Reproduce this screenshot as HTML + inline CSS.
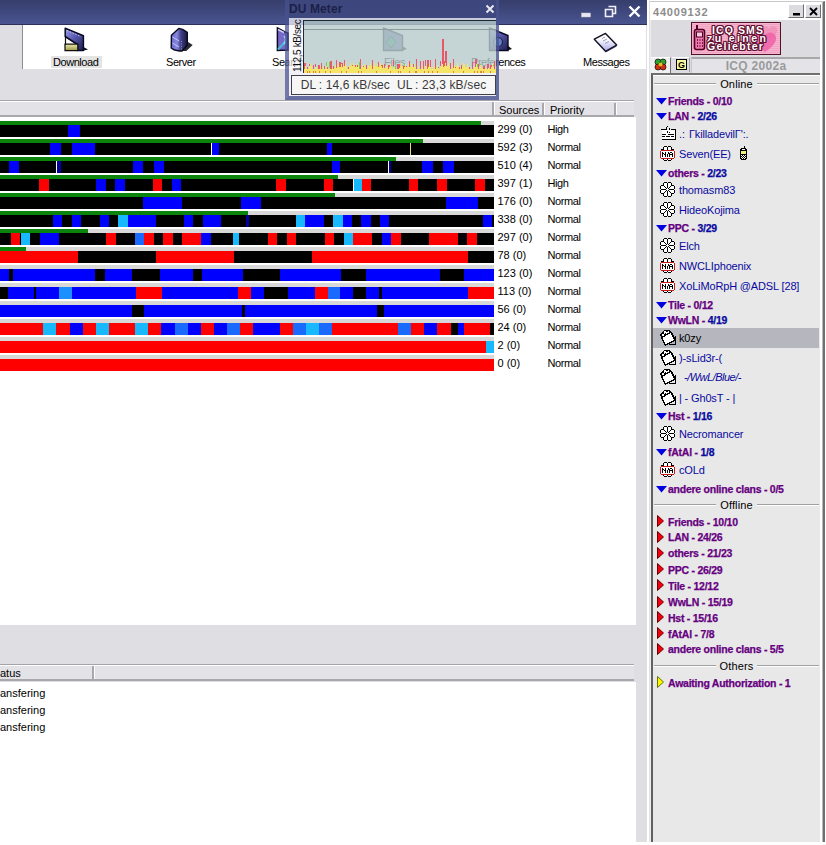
<!DOCTYPE html>
<html><head><meta charset="utf-8">
<style>
*{margin:0;padding:0;box-sizing:border-box}
html,body{width:826px;height:845px;overflow:hidden;background:#fff;font-family:"Liberation Sans",sans-serif;position:relative}
.a{position:absolute}
#main{position:absolute;left:0;top:0;width:647px;height:842px;background:#dfdfe3}
#title{position:absolute;left:0;top:0;width:647px;height:25px;background:linear-gradient(#363e6b,#4a5490);border-bottom:1px solid #2a3058}
#toolbar{position:absolute;left:22px;top:25px;width:624px;height:44px;background:#fff;border-left:1px solid #8c8c94}
.tb{position:absolute;font-size:11px;color:#000;line-height:12px;white-space:nowrap;letter-spacing:-0.45px}
.hdr{position:absolute;height:16px;background:#e3e2e6;border-top:1px solid #fff;box-shadow:0 -1px 0 #a4a4a8;border-bottom:2px solid #a8a7ac;font-size:11px;line-height:14px;color:#000;white-space:nowrap;overflow:hidden}
.hdr span{position:absolute;top:0;height:14px;border-right:2px solid #a8a7ac;padding-left:4px;box-shadow:1px 0 0 #fff}
#list{position:absolute;left:0;top:117px;width:636px;height:508px;background:#fff}
.pg{position:absolute;left:0;width:494px;height:4px;background:#d8d8d8}
.pg i{position:absolute;left:0;top:0;height:4px;background:#0a840a}
.ch{position:absolute;left:0;width:494px;height:12px;background:#000}
.ch i{position:absolute;top:0;height:12px}
.tx{position:absolute;font-size:11px;line-height:14px;height:14px;color:#000;white-space:nowrap}
#list2{position:absolute;left:0;top:682px;width:636px;height:160px;background:#fff}
.st{position:absolute;left:0;font-size:11px;line-height:14px;color:#000;white-space:nowrap}
/* DU meter */
#du{position:absolute;left:285px;top:0;width:214px;height:100px;border-left:4px solid rgba(72,82,145,0.72);border-right:3px solid rgba(72,82,145,0.8);border-bottom:4px solid rgba(72,82,145,0.8)}
#dutitle{position:absolute;left:0;top:0;width:207px;height:17.5px;background:rgba(62,72,126,0.9)}
.dp{position:absolute;background:rgba(245,245,252,0.74)}
#graph{position:absolute;left:303px;top:20px;width:193px;height:53px;background:rgba(183,202,202,0.80);border-left:1px solid #202830;border-top:1px solid #202830;border-bottom:1px solid #303838}
#dlbox{position:absolute;left:291px;top:75px;width:205px;height:20px;background:rgba(246,246,246,0.95);border:1px solid #404048;font-size:12px;line-height:19px;color:#383838;text-align:center;white-space:nowrap;letter-spacing:0.15px}
/* ICQ */
#icq{position:absolute;left:649px;top:1px;width:176px;height:841px;background:#dcdce0;border-left:1px solid #e0e0e0;border-top:1px solid #c8c8c8;border-right:2px solid #707070;box-shadow:inset -1px 0 0 #b8b8b8,inset -3px 0 0 #fff,inset 1px 0 0 #eeeeee}
#icqtitle{position:absolute;left:650px;top:2px;width:170px;height:18px;background:#fff}
.btn{position:absolute;top:4px;width:16px;height:14px;background:#dcdce0;border-top:1px solid #fff;border-left:1px solid #fff;border-right:1px solid #707070;border-bottom:1px solid #707070}
#clist{position:absolute;left:651px;top:73px;width:169px;height:769px;background:#e8e8e8;border-left:2px solid #606060;border-top:2px solid #707070;box-shadow:inset 0 1px 0 #fff}
.sep{position:absolute;left:654px;width:165px;height:14px;display:flex;align-items:center;font-size:11px;color:#000;white-space:nowrap;letter-spacing:0.15px}
.sep b{flex:1;height:2px;border-top:1px solid #a0a0a0;border-bottom:1px solid #fff}
.sep span{padding:0 4px}
.grp{position:absolute;left:668px;height:14px;line-height:14px;font-size:10.5px;font-weight:bold;color:#660080;white-space:nowrap;letter-spacing:-0.25px;-webkit-text-stroke:0.25px currentColor}
.arr{position:absolute}
.bn{font-weight:bold;color:#fff;line-height:11px;white-space:nowrap;text-shadow:1px 0 #601030,-1px 0 #601030,0 1px #601030,0 -1px #601030,1px 1px #601030,-1px -1px #601030,1px -1px #601030,-1px 1px #601030}
.ic{position:absolute;left:660px;shape-rendering:crispEdges}
.ct{position:absolute;left:679px;height:16px;line-height:16px;font-size:11px;color:#0808a0;white-space:nowrap;letter-spacing:-0.15px}
.selbg{position:absolute;left:653px;width:166px;height:20px;background:#b6b6be}
</style></head><body>
<svg width="0" height="0" style="position:absolute">
<defs><symbol id="fl" viewBox="0 0 16 16"><path d="M4 0h3v1h-3zM8 0h3v1h-3zM3 1h1v1h-1zM7 1h1v1h-1zM11 1h1v1h-1zM3 2h1v1h-1zM7 2h1v1h-1zM11 2h1v1h-1zM1 3h3v1h-3zM7 3h1v1h-1zM11 3h3v1h-3zM0 4h1v1h-1zM4 4h1v1h-1zM7 4h1v1h-1zM10 4h1v1h-1zM14 4h1v1h-1zM0 5h1v1h-1zM5 5h1v1h-1zM7 5h1v1h-1zM9 5h1v1h-1zM14 5h1v1h-1zM0 6h1v1h-1zM6 6h1v1h-1zM8 6h1v1h-1zM14 6h1v1h-1zM1 7h5v1h-5zM9 7h5v1h-5zM0 8h1v1h-1zM6 8h1v1h-1zM8 8h1v1h-1zM14 8h1v1h-1zM0 9h1v1h-1zM5 9h1v1h-1zM7 9h1v1h-1zM9 9h1v1h-1zM14 9h1v1h-1zM0 10h1v1h-1zM4 10h1v1h-1zM7 10h1v1h-1zM10 10h1v1h-1zM14 10h1v1h-1zM1 11h3v1h-3zM7 11h1v1h-1zM11 11h3v1h-3zM3 12h1v1h-1zM7 12h1v1h-1zM11 12h1v1h-1zM3 13h1v1h-1zM7 13h1v1h-1zM11 13h1v1h-1zM4 14h3v1h-3zM8 14h3v1h-3z" fill="#000"/><path d="M4 1h3v1h-3zM8 1h3v1h-3zM4 2h3v1h-3zM8 2h3v1h-3zM4 3h3v1h-3zM8 3h3v1h-3zM1 4h3v1h-3zM5 4h2v1h-2zM8 4h2v1h-2zM11 4h3v1h-3zM1 5h4v1h-4zM6 5h1v1h-1zM8 5h1v1h-1zM10 5h4v1h-4zM1 6h5v1h-5zM7 6h1v1h-1zM9 6h5v1h-5zM6 7h3v1h-3zM1 8h5v1h-5zM7 8h1v1h-1zM9 8h5v1h-5zM1 9h4v1h-4zM6 9h1v1h-1zM8 9h1v1h-1zM10 9h4v1h-4zM1 10h3v1h-3zM5 10h2v1h-2zM8 10h2v1h-2zM11 10h3v1h-3zM4 11h3v1h-3zM8 11h3v1h-3zM4 12h3v1h-3zM8 12h3v1h-3zM4 13h3v1h-3zM8 13h3v1h-3z" fill="#fff"/></symbol><symbol id="na" viewBox="0 0 16 16"><path d="M4 0h3v1h-3zM8 0h3v1h-3zM3 1h1v1h-1zM7 1h1v1h-1zM11 1h1v1h-1zM3 2h1v1h-1zM7 2h1v1h-1zM11 2h1v1h-1zM1 3h3v1h-3zM7 3h1v1h-1zM11 3h3v1h-3zM2 6h1v1h-1zM5 6h1v1h-1zM8 6h1v1h-1zM10 6h2v1h-2zM2 7h2v1h-2zM5 7h1v1h-1zM8 7h2v1h-2zM12 7h1v1h-1zM2 8h1v1h-1zM4 8h2v1h-2zM7 8h1v1h-1zM9 8h4v1h-4zM2 9h1v1h-1zM5 9h1v1h-1zM7 9h1v1h-1zM9 9h1v1h-1zM12 9h1v1h-1zM2 10h1v1h-1zM5 10h1v1h-1zM7 10h1v1h-1zM9 10h1v1h-1zM12 10h1v1h-1zM3 13h1v1h-1zM7 13h1v1h-1zM11 13h1v1h-1zM4 14h3v1h-3zM8 14h3v1h-3z" fill="#000"/><path d="M4 1h3v1h-3zM8 1h3v1h-3zM4 2h3v1h-3zM8 2h3v1h-3zM4 3h3v1h-3zM8 3h3v1h-3zM1 5h13v1h-13zM1 6h1v1h-1zM3 6h2v1h-2zM6 6h2v1h-2zM9 6h1v1h-1zM12 6h2v1h-2zM1 7h1v1h-1zM4 7h1v1h-1zM6 7h2v1h-2zM10 7h2v1h-2zM13 7h1v1h-1zM1 8h1v1h-1zM3 8h1v1h-1zM6 8h1v1h-1zM8 8h1v1h-1zM13 8h1v1h-1zM1 9h1v1h-1zM3 9h2v1h-2zM6 9h1v1h-1zM8 9h1v1h-1zM10 9h2v1h-2zM13 9h1v1h-1zM1 10h1v1h-1zM3 10h2v1h-2zM6 10h1v1h-1zM8 10h1v1h-1zM10 10h2v1h-2zM13 10h1v1h-1zM1 11h13v1h-13zM4 13h3v1h-3zM8 13h3v1h-3z" fill="#fff"/><path d="M1 4h13v1h-13zM0 5h1v1h-1zM14 5h1v1h-1zM0 6h1v1h-1zM14 6h1v1h-1zM0 7h1v1h-1zM14 7h1v1h-1zM0 8h1v1h-1zM14 8h1v1h-1zM0 9h1v1h-1zM14 9h1v1h-1zM0 10h1v1h-1zM14 10h1v1h-1zM0 11h1v1h-1zM14 11h1v1h-1zM1 12h13v1h-13z" fill="#c81818"/></symbol><symbol id="np" viewBox="0 0 16 16"><path d="M3.5 3.5A2 2 0 0 1 7 1.5A2 2 0 0 1 10 1.5L11 2.5L2 8L1 6A2 2 0 0 1 3.5 3.5Z" fill="#fff" stroke="#000" stroke-width="1.3"/><path d="M4 5L6 3.5M5.5 6.5L8 5" stroke="#000" stroke-width="1"/><path d="M9 14.5H15.5V6" fill="none" stroke="#000" stroke-width="1.4"/><path d="M1.5 7.5L11 2L15 10L5.5 15.2Z" fill="#fff" stroke="#000" stroke-width="1.4" stroke-linejoin="round"/></symbol><symbol id="kb" viewBox="0 0 16 16"><path d="M6 0h1v1h-1zM5 1h1v1h-1zM5 2h1v1h-1zM8 2h1v1h-1zM0 3h6v1h-6zM8 3h1v1h-1zM10 3h5v1h-5zM14 4h1v1h-1zM6 5h1v1h-1zM14 5h1v1h-1zM6 6h1v1h-1zM8 6h1v1h-1zM14 6h1v1h-1zM14 7h1v1h-1zM1 8h4v1h-4zM7 8h6v1h-6zM14 8h1v1h-1zM14 9h1v1h-1zM1 10h3v1h-3zM5 10h4v1h-4zM10 10h3v1h-3zM14 10h1v1h-1zM14 11h1v1h-1zM14 12h1v1h-1zM1 13h14v1h-14z" fill="#000"/><path d="M1 4h13v1h-13zM1 5h5v1h-5zM7 5h7v1h-7zM1 6h5v1h-5zM7 6h1v1h-1zM9 6h5v1h-5zM1 7h13v1h-13zM5 8h2v1h-2zM13 8h1v1h-1zM1 9h13v1h-13zM4 10h1v1h-1zM9 10h1v1h-1zM13 10h1v1h-1zM1 11h13v1h-13zM1 12h13v1h-13z" fill="#fff"/></symbol><symbol id="ph" viewBox="0 0 7 14"><path d="M4 0h1v1h-1zM4 1h1v1h-1zM1 2h5v1h-5zM0 3h2v1h-2zM5 3h2v1h-2zM0 4h7v1h-7zM0 5h1v1h-1zM6 5h1v1h-1zM0 6h1v1h-1zM6 6h1v1h-1zM0 7h1v1h-1zM6 7h1v1h-1zM0 8h7v1h-7zM0 9h1v1h-1zM2 9h1v1h-1zM4 9h1v1h-1zM6 9h1v1h-1zM0 10h2v1h-2zM3 10h1v1h-1zM5 10h2v1h-2zM0 11h1v1h-1zM2 11h1v1h-1zM4 11h1v1h-1zM6 11h1v1h-1zM0 12h2v1h-2zM3 12h1v1h-1zM5 12h2v1h-2zM1 13h5v1h-5z" fill="#000"/><path d="M2 3h3v1h-3zM1 9h1v1h-1zM3 9h1v1h-1zM5 9h1v1h-1zM2 10h1v1h-1zM4 10h1v1h-1zM1 11h1v1h-1zM3 11h1v1h-1zM5 11h1v1h-1zM2 12h1v1h-1zM4 12h1v1h-1z" fill="#fff"/><path d="M1 5h5v1h-5zM1 6h5v1h-5zM1 7h5v1h-5z" fill="#eef080"/></symbol></defs>
</svg>
<div id="main">
  <div id="title">
    <svg class="a" style="left:581px;top:12px" width="10" height="7"><rect x="0.5" y="1" width="9" height="4" fill="#e8e8f0" stroke="#c0c0d0" stroke-width=".5"/></svg>
    <svg class="a" style="left:604px;top:5px" width="13" height="13"><path d="M4.5 1.5H11.5V8.5H9M1.5 4.5H8.5V11.5H1.5Z" fill="none" stroke="#f0f0f8" stroke-width="1.6"/></svg>
    <svg class="a" style="left:628px;top:5px" width="13" height="13"><path d="M1.5 1.5L11.5 11.5M11.5 1.5L1.5 11.5" stroke="#fff" stroke-width="2.4"/></svg>
  </div>
  <div id="toolbar"></div>
  <svg class="a" style="left:0;top:0" width="647" height="100">
    <defs>
      <linearGradient id="gp" x1="0" y1="0" x2="1" y2="1"><stop offset="0" stop-color="#a0a0f0"/><stop offset=".45" stop-color="#5a5ab0"/><stop offset="1" stop-color="#1c1c50"/></linearGradient>
      <linearGradient id="gs" x1="0" y1="0" x2="1" y2="0"><stop offset="0" stop-color="#6868c8"/><stop offset=".35" stop-color="#8888e0"/><stop offset=".6" stop-color="#404088"/><stop offset="1" stop-color="#181840"/></linearGradient>
      <linearGradient id="gk" x1="0" y1="0" x2="0" y2="1"><stop offset="0" stop-color="#e8e8a8"/><stop offset="1" stop-color="#a09848"/></linearGradient>
      <linearGradient id="gm" x1="0" y1="0" x2="0" y2="1"><stop offset=".3" stop-color="#ffffff"/><stop offset="1" stop-color="#a8a8e8"/></linearGradient>
    </defs>
    <!-- Download -->
    <g transform="translate(62,26)">
      <path d="M20.5 20.5L26 23.5L20 25Z" fill="#101018"/>
      <path d="M3.5 10.5L15.5 18.5L15.5 21L3.5 21Z" fill="#fff" stroke="#101010" stroke-width="1.2"/>
      <path d="M7 13.5L9 12L11 15" fill="none" stroke="#404040" stroke-width=".8"/>
      <path d="M3.2 2.2L21.4 9.8L21.4 24.5L15.5 24.5L15.5 18.5L3.2 10.5Z" fill="url(#gp)" stroke="#0a0a20" stroke-width="1.5" stroke-linejoin="round"/>
      <path d="M5 4.5L19 10.5" stroke="#c0c0ff" stroke-width="1" stroke-dasharray="1.5 1.5"/>
      <path d="M3 18.2H15.8V24.6H3Z" fill="url(#gk)" stroke="#101010" stroke-width="1.2"/>
    </g>
    <!-- Server -->
    <g transform="translate(168,26)">
      <path d="M12 19L19.3 15.5L24.7 19L18.3 25L11.5 25Z" fill="#2a2a30"/>
      <path d="M3.4 9.2L10.8 2.4L14.6 3.4L19.3 6.4L19.3 19L14 25L11.5 25L5.8 23.7L3.2 22Z" fill="url(#gs)" stroke="#0a0a20" stroke-width="1.4" stroke-linejoin="round"/>
      <path d="M4.5 11L11 15M4.5 17L11 21" stroke="#c8c8ff" stroke-width="1"/>
      <path d="M13.5 15V24" stroke="#a0a0c0" stroke-width=".8" stroke-dasharray="1 1.5"/>
    </g>
    <!-- Search -->
    <g transform="translate(272,24)">
      <path d="M5.4 4L13 8L16 9V26L5.4 26.5Z" fill="#7a68c8" stroke="#0a0a20" stroke-width="1.5"/>
      <path d="M6 5.5L12 8.5" stroke="#d0d0ff" stroke-width="1.5"/>
      <path d="M6 25.5L14 17" stroke="#40c0d0" stroke-width="2"/>
      <path d="M12 12Q15 15 12 20" stroke="#80e0f0" stroke-width="1.5" fill="none"/>
    </g>
    <!-- Files -->
    <g transform="translate(382,26)">
      <path d="M20 20L25 23L19 25Z" fill="#202028"/>
      <path d="M1.5 2L20.5 9.5L20.5 24.5L1.5 24.5Z" fill="#7078b0" stroke="#202030" stroke-width="1.4"/>
      <path d="M4 16L9 10L14 16L9 22Z" fill="#40a080" stroke="#205040" stroke-width="1"/>
    </g>
    <!-- Preferences -->
    <g transform="translate(488,26)">
      <path d="M19 19L24 23L18 25Z" fill="#101018"/>
      <path d="M1.5 2L20 9.5L20 24.5L1.5 24.5Z" fill="url(#gp)" stroke="#0a0a20" stroke-width="1.4"/>
      <circle cx="10" cy="16" r="4.5" fill="#6080c0" stroke="#202040" stroke-width="1.2"/>
    </g>
    <!-- Messages -->
    <g transform="translate(590,28)">
      <path d="M4.3 11.2L15.5 5.4L26.7 17L15.5 23.3Z" fill="url(#gm)" stroke="#101020" stroke-width="1.4" stroke-linejoin="round"/>
      <path d="M15.5 23.3L26.7 17L26.5 18.5L15.5 24.5Z" fill="#202040"/>
      <path d="M12 10.5L15 9M13 13L17 11M15 15.5L19 13.5" stroke="#8888a8" stroke-width=".8"/>
    </g>
  </svg>
  <div class="tb" style="left:51px;top:56px;width:51px;height:12px;background:#e4e4e4"></div>
  <div class="tb" style="left:53px;top:56px">Download</div>
  <div class="tb" style="left:166px;top:56px">Server</div>
  <div class="tb" style="left:272px;top:56px">Search</div>
  <div class="tb" style="left:384px;top:56px">Files</div>
  <div class="tb" style="left:471px;top:56px">Preferences</div>
  <div class="tb" style="left:583px;top:56px">Messages</div>
  <div class="hdr" style="left:0;top:101px;width:634px">
    <span style="left:0;width:494px"></span>
    <span style="left:494px;width:50px;padding-left:5px;top:1px">Sources</span>
    <span style="left:544px;width:72px;padding-left:6px;top:1px">Priority</span>
  </div>
  <div id="list"></div>
  <div class="hdr" style="left:0;top:665px;width:634px">
    <span style="left:0;width:94px;padding-left:0">atus</span>
  </div>
  <div id="list2">
    <div class="st" style="top:4px">ansfering</div>
    <div class="st" style="top:21px">ansfering</div>
    <div class="st" style="top:38px">ansfering</div>
  </div>
</div>
<div class="pg" style="top:121px"><i style="width:481px"></i></div>
<div class="ch" style="top:125px"><i style="left:68px;width:12px;background:#0000ff"></i></div>
<div class="tx" style="top:122px;left:497.5px">299 (0)</div>
<div class="tx" style="top:122px;left:547.5px;letter-spacing:-0.4px">High</div>
<div class="pg" style="top:139px"><i style="width:423px"></i></div>
<div class="ch" style="top:143px"><i style="left:50px;width:11px;background:#0000ff"></i><i style="left:72px;width:23px;background:#0000ff"></i><i style="left:212px;width:7px;background:#0000ff"></i><i style="left:327px;width:5px;background:#0000ff"></i><i style="left:211px;width:1px;background:#ffffff"></i><i style="left:410px;width:1px;background:#e8e070"></i></div>
<div class="tx" style="top:140px;left:497.5px">592 (3)</div>
<div class="tx" style="top:140px;left:547.5px;letter-spacing:-0.4px">Normal</div>
<div class="pg" style="top:157px"><i style="width:396px"></i></div>
<div class="ch" style="top:161px"><i style="left:9px;width:10px;background:#0000ff"></i><i style="left:57px;width:4px;background:#0000a0"></i><i style="left:133px;width:10px;background:#0000ff"></i><i style="left:154px;width:10px;background:#0000ff"></i><i style="left:332px;width:8px;background:#0000ff"></i><i style="left:389px;width:2px;background:#0000a0"></i><i style="left:422px;width:11px;background:#0000ff"></i><i style="left:443px;width:11px;background:#0000ff"></i><i style="left:56px;width:1px;background:#ffffff"></i><i style="left:388px;width:1px;background:#ffffff"></i></div>
<div class="tx" style="top:158px;left:497.5px">510 (4)</div>
<div class="tx" style="top:158px;left:547.5px;letter-spacing:-0.4px">Normal</div>
<div class="pg" style="top:175px"><i style="width:338px"></i></div>
<div class="ch" style="top:179px"><i style="left:39px;width:10px;background:#ff0000"></i><i style="left:96px;width:10px;background:#0000ff"></i><i style="left:115px;width:10px;background:#0000ff"></i><i style="left:153px;width:9px;background:#ff0000"></i><i style="left:172px;width:9px;background:#0000ff"></i><i style="left:276px;width:10px;background:#ff0000"></i><i style="left:324px;width:9px;background:#ff0000"></i><i style="left:354px;width:8px;background:#18b8ff"></i><i style="left:362px;width:9px;background:#ff0000"></i><i style="left:409px;width:9px;background:#ff0000"></i><i style="left:437px;width:10px;background:#ff0000"></i><i style="left:475px;width:10px;background:#ff0000"></i><i style="left:353px;width:1px;background:#ffffff"></i></div>
<div class="tx" style="top:176px;left:497.5px">397 (1)</div>
<div class="tx" style="top:176px;left:547.5px;letter-spacing:-0.4px">High</div>
<div class="pg" style="top:193px"><i style="width:335px"></i></div>
<div class="ch" style="top:197px"><i style="left:143px;width:39px;background:#0000ff"></i><i style="left:241px;width:20px;background:#0000ff"></i><i style="left:446px;width:32px;background:#0000ff"></i></div>
<div class="tx" style="top:194px;left:497.5px">176 (0)</div>
<div class="tx" style="top:194px;left:547.5px;letter-spacing:-0.4px">Normal</div>
<div class="pg" style="top:211px"><i style="width:248px"></i></div>
<div class="ch" style="top:215px"><i style="left:53px;width:9px;background:#0000ff"></i><i style="left:72px;width:9px;background:#0000ff"></i><i style="left:100px;width:9px;background:#0000ff"></i><i style="left:118px;width:10px;background:#18b8ff"></i><i style="left:128px;width:28px;background:#0000ff"></i><i style="left:184px;width:9px;background:#0000ff"></i><i style="left:203px;width:18px;background:#0000ff"></i><i style="left:246px;width:3px;background:#0000a0"></i><i style="left:296px;width:9px;background:#18b8ff"></i><i style="left:305px;width:19px;background:#0000ff"></i><i style="left:333px;width:10px;background:#18b8ff"></i><i style="left:343px;width:9px;background:#0000ff"></i><i style="left:361px;width:10px;background:#0000ff"></i><i style="left:380px;width:9px;background:#0000ff"></i><i style="left:483px;width:9px;background:#0000ff"></i></div>
<div class="tx" style="top:212px;left:497.5px">338 (0)</div>
<div class="tx" style="top:212px;left:547.5px;letter-spacing:-0.4px">Normal</div>
<div class="pg" style="top:229px"><i style="width:88px"></i></div>
<div class="ch" style="top:233px"><i style="left:11px;width:9px;background:#ff0000"></i><i style="left:21px;width:9px;background:#18b8ff"></i><i style="left:40px;width:19px;background:#0000ff"></i><i style="left:106px;width:10px;background:#ff0000"></i><i style="left:135px;width:9px;background:#1a6aff"></i><i style="left:144px;width:10px;background:#ff0000"></i><i style="left:163px;width:10px;background:#ff0000"></i><i style="left:182px;width:19px;background:#ff0000"></i><i style="left:201px;width:10px;background:#0000ff"></i><i style="left:233px;width:6px;background:#18b8ff"></i><i style="left:268px;width:9px;background:#ff0000"></i><i style="left:287px;width:9px;background:#ff0000"></i><i style="left:325px;width:9px;background:#ff0000"></i><i style="left:344px;width:9px;background:#18b8ff"></i><i style="left:353px;width:19px;background:#ff0000"></i><i style="left:382px;width:9px;background:#0000ff"></i><i style="left:391px;width:10px;background:#ff0000"></i><i style="left:429px;width:29px;background:#ff0000"></i><i style="left:467px;width:10px;background:#ff0000"></i></div>
<div class="tx" style="top:230px;left:497.5px">297 (0)</div>
<div class="tx" style="top:230px;left:547.5px;letter-spacing:-0.4px">Normal</div>
<div class="pg" style="top:247px"><i style="width:26px"></i></div>
<div class="ch" style="top:251px"><i style="left:0px;width:78px;background:#ff0000"></i><i style="left:156px;width:78px;background:#ff0000"></i><i style="left:312px;width:156px;background:#ff0000"></i></div>
<div class="tx" style="top:248px;left:497.5px">78 (0)</div>
<div class="tx" style="top:248px;left:547.5px;letter-spacing:-0.4px">Normal</div>
<div class="pg" style="top:265px"><i style="width:0px"></i></div>
<div class="ch" style="top:269px"><i style="left:0px;width:9px;background:#0000ff"></i><i style="left:13px;width:82px;background:#0000ff"></i><i style="left:105px;width:27px;background:#0000ff"></i><i style="left:160px;width:33px;background:#0000ff"></i><i style="left:202px;width:41px;background:#0000ff"></i><i style="left:280px;width:61px;background:#0000ff"></i><i style="left:366px;width:74px;background:#0000ff"></i><i style="left:464px;width:30px;background:#0000ff"></i></div>
<div class="tx" style="top:266px;left:497.5px">123 (0)</div>
<div class="tx" style="top:266px;left:547.5px;letter-spacing:-0.4px">Normal</div>
<div class="pg" style="top:283px"><i style="width:0px"></i></div>
<div class="ch" style="top:287px"><i style="left:8px;width:26px;background:#0000ff"></i><i style="left:36px;width:23px;background:#0000ff"></i><i style="left:59px;width:13px;background:#1c90ff"></i><i style="left:72px;width:64px;background:#0000ff"></i><i style="left:136px;width:26px;background:#ff0000"></i><i style="left:162px;width:76px;background:#0000ff"></i><i style="left:238px;width:13px;background:#ff0000"></i><i style="left:251px;width:13px;background:#0000ff"></i><i style="left:288px;width:27px;background:#0000ff"></i><i style="left:315px;width:13px;background:#ff0000"></i><i style="left:328px;width:12px;background:#1a6aff"></i><i style="left:340px;width:13px;background:#0000ff"></i><i style="left:366px;width:13px;background:#0000ff"></i><i style="left:382px;width:86px;background:#0000ff"></i><i style="left:468px;width:26px;background:#ff0000"></i></div>
<div class="tx" style="top:284px;left:497.5px">113 (0)</div>
<div class="tx" style="top:284px;left:547.5px;letter-spacing:-0.4px">Normal</div>
<div class="pg" style="top:301px"><i style="width:0px"></i></div>
<div class="ch" style="top:305px"><i style="left:0px;width:132px;background:#0000ff"></i><i style="left:144px;width:98px;background:#0000ff"></i><i style="left:245px;width:132px;background:#0000ff"></i><i style="left:384px;width:110px;background:#0000ff"></i></div>
<div class="tx" style="top:302px;left:497.5px">56 (0)</div>
<div class="tx" style="top:302px;left:547.5px;letter-spacing:-0.4px">Normal</div>
<div class="pg" style="top:319px"><i style="width:0px"></i></div>
<div class="ch" style="top:323px"><i style="left:0px;width:43px;background:#ff0000"></i><i style="left:43px;width:13px;background:#18b8ff"></i><i style="left:56px;width:14px;background:#ff0000"></i><i style="left:70px;width:13px;background:#0000ff"></i><i style="left:83px;width:13px;background:#ff0000"></i><i style="left:96px;width:13px;background:#18b8ff"></i><i style="left:109px;width:26px;background:#ff0000"></i><i style="left:135px;width:13px;background:#18b8ff"></i><i style="left:148px;width:13px;background:#ff0000"></i><i style="left:161px;width:14px;background:#0000ff"></i><i style="left:175px;width:13px;background:#1a6aff"></i><i style="left:188px;width:13px;background:#0000ff"></i><i style="left:201px;width:13px;background:#ff0000"></i><i style="left:214px;width:13px;background:#0000ff"></i><i style="left:227px;width:13px;background:#1a6aff"></i><i style="left:240px;width:13px;background:#ff0000"></i><i style="left:253px;width:27px;background:#0000ff"></i><i style="left:280px;width:13px;background:#ff0000"></i><i style="left:293px;width:13px;background:#1a6aff"></i><i style="left:306px;width:13px;background:#18b8ff"></i><i style="left:319px;width:13px;background:#1a6aff"></i><i style="left:332px;width:66px;background:#ff0000"></i><i style="left:398px;width:13px;background:#1a6aff"></i><i style="left:411px;width:13px;background:#ff0000"></i><i style="left:424px;width:13px;background:#0000ff"></i><i style="left:437px;width:14px;background:#ff0000"></i><i style="left:451px;width:7px;background:#000000"></i><i style="left:458px;width:6px;background:#0000ff"></i><i style="left:464px;width:26px;background:#ff0000"></i></div>
<div class="tx" style="top:320px;left:497.5px">24 (0)</div>
<div class="tx" style="top:320px;left:547.5px;letter-spacing:-0.4px">Normal</div>
<div class="pg" style="top:337px"><i style="width:0px"></i></div>
<div class="ch" style="top:341px"><i style="left:0px;width:486px;background:#ff0000"></i><i style="left:486px;width:8px;background:#18b8ff"></i></div>
<div class="tx" style="top:338px;left:497.5px">2 (0)</div>
<div class="tx" style="top:338px;left:547.5px;letter-spacing:-0.4px">Normal</div>
<div class="pg" style="top:355px"><i style="width:0px"></i></div>
<div class="ch" style="top:359px"><i style="left:0px;width:494px;background:#ff0000"></i></div>
<div class="tx" style="top:356px;left:497.5px">0 (0)</div>
<div class="tx" style="top:356px;left:547.5px;letter-spacing:-0.4px">Normal</div>
<!-- DU meter -->
<div id="du"><div id="dutitle"></div><div class="dp" style="left:0;top:17.5px;width:207px;height:2.5px"></div><div class="dp" style="left:0;top:20px;width:14px;height:52.5px"></div><div class="dp" style="left:0;top:72.5px;width:207px;height:23.5px"></div>
  <div class="a" style="left:0px;top:3px;font-size:12px;font-weight:bold;color:#1c2048;line-height:12px;letter-spacing:0.1px">DU Meter</div>
  <svg class="a" style="left:196px;top:4px" width="10" height="10"><path d="M1.5 1.5L8.5 8.5M8.5 1.5L1.5 8.5" stroke="#e8e8f4" stroke-width="2"/></svg>
</div>
<div id="graph"><svg width="192" height="52" style="position:absolute;left:0;top:0">
<rect x="0" y="8" width="192" height="1" fill="#8a9c9c"/>
<path d="M0 42h2v10h-2zM3 46h1v6h-1zM5 43h1v9h-1zM9 44h1v8h-1zM11 43h1v9h-1zM14 44h2v8h-2zM17 42h1v10h-1zM20 45h1v7h-1zM23 46h1v6h-1zM26 40h2v12h-2zM29 45h1v7h-1zM32 39h1v13h-1zM35 41h2v11h-2zM37 42h2v10h-2zM40 39h1v13h-1zM44 46h1v6h-1zM48 44h1v8h-1zM51 44h2v8h-2zM53 44h1v8h-1zM56 38h1v14h-1zM59 45h1v7h-1zM62 44h1v8h-1zM65 45h1v7h-1zM68 39h1v13h-1zM71 46h1v6h-1zM74 41h1v11h-1zM77 44h2v8h-2zM80 43h1v9h-1zM84 44h2v8h-2zM87 46h1v6h-1zM89 39h1v13h-1zM93 43h2v9h-2zM95 43h1v9h-1zM99 45h2v7h-2zM102 45h1v7h-1zM105 40h1v12h-1zM109 43h1v9h-1zM112 38h1v14h-1zM116 40h1v12h-1zM119 40h1v12h-1zM121 39h1v13h-1zM123 39h2v13h-2zM126 39h1v13h-1zM128 46h1v6h-1zM131 38h1v14h-1zM134 46h1v6h-1zM136 40h1v12h-1zM140 40h2v12h-2zM142 42h1v10h-1zM146 42h1v10h-1zM149 38h1v14h-1zM151 46h1v6h-1zM155 46h1v6h-1zM157 44h1v8h-1zM159 43h1v9h-1zM162 46h2v6h-2zM165 46h1v6h-1zM168 41h1v11h-1zM171 38h2v14h-2zM174 43h1v9h-1zM176 46h1v6h-1zM179 45h2v7h-2zM183 43h2v9h-2zM186 44h2v8h-2zM190 40h1v12h-1zM138 18h2v34h-2zM141 30h2v22h-2z" fill="#e85868"/><path d="M22 41h1v11h-1zM25 41h1v11h-1zM34 47h1v5h-1zM55 41h1v11h-1zM89 45h1v7h-1zM91 45h1v7h-1zM104 43h1v9h-1zM111 47h1v5h-1zM121 47h1v5h-1zM136 45h1v7h-1zM151 47h1v5h-1zM159 45h1v7h-1zM173 43h1v9h-1zM176 43h1v9h-1zM188 43h1v9h-1z" fill="#78d048"/><path d="M0 48h192v4h-192zM0 48h3v4h-3zM1 45h1v7h-1zM4 50h3v2h-3zM5 47h1v5h-1zM5 45h3v7h-3zM6 42h1v10h-1zM10 49h3v3h-3zM11 46h1v6h-1zM11 49h3v3h-3zM12 46h1v6h-1zM15 49h3v3h-3zM16 46h1v6h-1zM18 48h3v4h-3zM19 45h1v7h-1zM21 48h3v4h-3zM22 45h1v7h-1zM24 50h3v2h-3zM25 47h1v5h-1zM27 50h3v2h-3zM28 47h1v5h-1zM30 47h3v5h-3zM31 44h1v8h-1zM33 46h3v6h-3zM34 43h1v9h-1zM36 46h3v6h-3zM37 43h1v9h-1zM38 48h3v4h-3zM39 45h1v7h-1zM40 45h3v7h-3zM41 42h1v10h-1zM45 45h3v7h-3zM46 42h1v10h-1zM48 45h3v7h-3zM49 42h1v10h-1zM51 46h3v6h-3zM52 43h1v9h-1zM53 48h3v4h-3zM54 45h1v7h-1zM57 47h3v5h-3zM58 44h1v8h-1zM59 46h3v6h-3zM60 43h1v9h-1zM63 47h3v5h-3zM64 44h1v8h-1zM65 45h3v7h-3zM66 42h1v10h-1zM69 45h3v7h-3zM70 42h1v10h-1zM72 46h3v6h-3zM73 43h1v9h-1zM75 45h3v7h-3zM76 42h1v10h-1zM78 47h3v5h-3zM79 44h1v8h-1zM81 47h3v5h-3zM82 44h1v8h-1zM85 46h3v6h-3zM86 43h1v9h-1zM88 49h3v3h-3zM89 46h1v6h-1zM89 49h3v3h-3zM90 46h1v6h-1zM94 50h3v2h-3zM95 47h1v5h-1zM96 45h3v7h-3zM97 42h1v10h-1zM100 46h3v6h-3zM101 43h1v9h-1zM103 46h3v6h-3zM104 43h1v9h-1zM106 46h3v6h-3zM107 43h1v9h-1zM109 46h3v6h-3zM110 43h1v9h-1zM113 48h3v4h-3zM114 45h1v7h-1zM117 49h3v3h-3zM118 46h1v6h-1zM120 48h3v4h-3zM121 45h1v7h-1zM121 48h3v4h-3zM122 45h1v7h-1zM124 46h3v6h-3zM125 43h1v9h-1zM127 49h3v3h-3zM128 46h1v6h-1zM129 48h3v4h-3zM130 45h1v7h-1zM132 47h3v5h-3zM133 44h1v8h-1zM135 48h3v4h-3zM136 45h1v7h-1zM137 46h3v6h-3zM138 43h1v9h-1zM140 45h3v7h-3zM141 42h1v10h-1zM143 45h3v7h-3zM144 42h1v10h-1zM147 49h3v3h-3zM148 46h1v6h-1zM149 47h3v5h-3zM150 44h1v8h-1zM152 45h3v7h-3zM153 42h1v10h-1zM155 50h3v2h-3zM156 47h1v5h-1zM158 45h3v7h-3zM159 42h1v10h-1zM159 46h3v6h-3zM160 43h1v9h-1zM162 46h3v6h-3zM163 43h1v9h-1zM166 50h3v2h-3zM167 47h1v5h-1zM169 49h3v3h-3zM170 46h1v6h-1zM171 46h3v6h-3zM172 43h1v9h-1zM175 47h3v5h-3zM176 44h1v8h-1zM177 50h3v2h-3zM178 47h1v5h-1zM180 50h3v2h-3zM181 47h1v5h-1zM183 50h3v2h-3zM184 47h1v5h-1zM187 46h3v6h-3zM188 43h1v9h-1z" fill="#f4e468"/><path d="M3 50h1v2h-1zM5 50h1v2h-1zM9 50h1v2h-1zM11 50h1v2h-1zM15 50h1v2h-1zM21 50h1v2h-1zM26 50h1v2h-1zM37 50h1v2h-1zM42 50h1v2h-1zM54 50h1v2h-1zM57 50h1v2h-1zM72 50h1v2h-1zM86 50h1v2h-1zM94 50h1v2h-1zM96 50h1v2h-1zM105 50h1v2h-1zM111 50h1v2h-1zM112 50h1v2h-1zM120 50h1v2h-1zM124 50h1v2h-1zM128 50h1v2h-1zM133 50h1v2h-1zM149 50h1v2h-1zM159 50h1v2h-1zM170 50h1v2h-1zM173 50h1v2h-1zM176 50h1v2h-1zM177 50h1v2h-1zM179 50h1v2h-1zM186 50h1v2h-1z" fill="#e08838"/>
</svg></div>
<div class="a" style="left:293px;top:72px;transform-origin:0 0;transform:rotate(-90deg);font-size:10px;line-height:10px;color:#101010;white-space:nowrap;width:52px;text-align:center;letter-spacing:-0.4px">112,5 kB/sec</div>
<div id="dlbox">DL<span style="letter-spacing:0">&thinsp;</span>: 14,6 kB/sec&nbsp; UL<span style="letter-spacing:0">&thinsp;</span>: 23,3 kB/sec</div>
<!-- ICQ -->
<div id="icq"></div>
<div id="icqtitle"></div>
<div class="a" style="left:653px;top:5px;font-size:11px;font-weight:bold;color:#8c8c8c;line-height:14px;letter-spacing:0.8px">44009132</div>
<div class="btn" style="left:788px"><svg class="a" style="left:4px;top:8px" width="7" height="3"><rect width="7" height="2.5" fill="#000"/></svg></div>
<div class="btn" style="left:805px"><svg class="a" style="left:3px;top:2px" width="9" height="9"><path d="M1 1L8 8M8 1L1 8" stroke="#000" stroke-width="1.8"/></svg></div>
<!-- banner -->
<div class="a" style="left:691px;top:22px;width:90px;height:33px;background:repeating-linear-gradient(#f6b4cf 0 1px,#f0a2c2 1px 2px);border:1px solid #501028"></div>
<svg class="a" style="left:747px;top:24px" width="34" height="30"><path d="M22 16C14 10 13 5 16 3C19 1 22 3 22 5C22 3 26 1 29 3C32 6 30 11 22 16Z" fill="#f080b0" opacity=".55"/><path d="M18 28C6 20 5 13 9 10C13 7 18 10 18 12C18 10 23 7 27 10C31 13 30 20 18 28Z" fill="#f060a8" opacity=".85"/></svg>
<svg class="a" style="left:693px;top:24px" width="14" height="27"><path d="M4 1V5" stroke="#500020" stroke-width="2"/><rect x="1.5" y="5.5" width="10" height="20" rx="2" fill="#f078b0" stroke="#500020" stroke-width="1.6"/><rect x="3.5" y="8" width="6" height="5" fill="#f8c8e0" stroke="#500020" stroke-width="1"/><path d="M4 16h1M6.5 16h1M9 16h1M4 19h1M6.5 19h1M9 19h1M4 22h1M6.5 22h1M9 22h1" stroke="#500020" stroke-width="1.4"/></svg>
<div class="a bn" style="left:712px;top:25px;font-size:10.5px;letter-spacing:1.1px">ICQ SMS</div>
<div class="a bn" style="left:707px;top:33px;font-size:10.5px;letter-spacing:2.4px">zu einen</div>
<div class="a bn" style="left:707px;top:41px;font-size:10.5px;letter-spacing:1.3px">Geliebter</div>
<!-- tabs -->
<div class="a" style="left:651px;top:57px;width:20px;height:16px;background:#f0f0f2;border-right:1px solid #707070;border-top:1px solid #fff"></div>
<svg class="a" style="left:654px;top:58px" width="13" height="13"><circle cx="4" cy="4" r="3" fill="#30a030" stroke="#102010" stroke-width=".8"/><circle cx="9" cy="4" r="3" fill="#30a030" stroke="#102010" stroke-width=".8"/><circle cx="4" cy="9" r="3" fill="#d03010" stroke="#201010" stroke-width=".8"/><circle cx="9" cy="9" r="3" fill="#d03010" stroke="#201010" stroke-width=".8"/><circle cx="6.5" cy="6.5" r="2" fill="#e0c020"/></svg>
<div class="a" style="left:672px;top:57px;width:18px;height:15px;background:#dcdce0;border-right:1px solid #a0a0a0;border-top:1px solid #fff"></div>
<svg class="a" style="left:676px;top:59px" width="11" height="11"><rect x="0.5" y="0.5" width="10" height="10" fill="#f8f8a0" stroke="#000"/><text x="5.5" y="9" font-size="9" font-weight="bold" text-anchor="middle" font-family="Liberation Sans">G</text></svg>
<div class="a" style="left:691px;top:57px;width:129px;height:16px;background:#e4e4e8;border-top:2px solid #a8a8a8;border-left:1px solid #c8c8c8;font-size:12px;font-weight:bold;color:#9a9a9a;text-align:center;line-height:14px;letter-spacing:0.3px">ICQ 2002a</div>
<div id="clist"></div>
<div class="sep" style="top:76.5px"><b></b><span>Online</span><b></b></div>
<svg class="arr" style="top:98px;left:656px" width="11" height="7"><path d="M0 0H11L5.5 6.5Z" fill="#0000e0"/></svg><div class="grp" style="top:93.6px">Friends - 0/10</div>
<svg class="arr" style="top:113px;left:656px" width="11" height="7"><path d="M0 0H11L5.5 6.5Z" fill="#0000e0"/></svg><div class="grp" style="top:109.4px">LAN - <span style="color:#0a0aa0">2/26</span></div>
<svg class="ic" style="top:126px;left:661px" width="16" height="16"><use href="#kb"/></svg>
<div class="ct" style="top:126.0px;">.:<span style="letter-spacing:1px"> </span>ΓkilladevilΓ':.</div>
<svg class="ic" style="top:146px;left:660px" width="16" height="16"><use href="#na"/></svg>
<div class="ct" style="top:146.0px;">Seven(EE)</div>
<svg class="a" style="left:740px;top:146px;shape-rendering:crispEdges" width="7" height="14"><use href="#ph"/></svg>
<svg class="arr" style="top:170px;left:656px" width="11" height="7"><path d="M0 0H11L5.5 6.5Z" fill="#0000e0"/></svg><div class="grp" style="top:166.0px">others - <span style="color:#0a0aa0">2/23</span></div>
<svg class="ic" style="top:182px;left:660px" width="16" height="16"><use href="#fl"/></svg>
<div class="ct" style="top:181.5px;">thomasm83</div>
<svg class="ic" style="top:202px;left:660px" width="16" height="16"><use href="#fl"/></svg>
<div class="ct" style="top:201.6px;">HideoKojima</div>
<svg class="arr" style="top:225px;left:656px" width="11" height="7"><path d="M0 0H11L5.5 6.5Z" fill="#0000e0"/></svg><div class="grp" style="top:221.2px">PPC - <span style="color:#0a0aa0">3/29</span></div>
<svg class="ic" style="top:238px;left:660px" width="16" height="16"><use href="#fl"/></svg>
<div class="ct" style="top:237.8px;">Elch</div>
<svg class="ic" style="top:258px;left:660px" width="16" height="16"><use href="#na"/></svg>
<div class="ct" style="top:257.5px;">NWCLIphoenix</div>
<svg class="ic" style="top:278px;left:660px" width="16" height="16"><use href="#na"/></svg>
<div class="ct" style="top:278.0px;">XoLiMoRpH @ADSL [28]</div>
<svg class="arr" style="top:302px;left:656px" width="11" height="7"><path d="M0 0H11L5.5 6.5Z" fill="#0000e0"/></svg><div class="grp" style="top:297.6px">Tile - 0/12</div>
<svg class="arr" style="top:317px;left:656px" width="11" height="7"><path d="M0 0H11L5.5 6.5Z" fill="#0000e0"/></svg><div class="grp" style="top:313.0px">WwLN - <span style="color:#0a0aa0">4/19</span></div>
<div class="selbg" style="top:328px"></div>
<svg class="ic" style="top:330px;left:660px" width="16" height="16"><use href="#np"/></svg>
<div class="ct" style="top:330.0px;color:#000;">k0zy</div>
<svg class="ic" style="top:350px;left:660px" width="16" height="16"><use href="#np"/></svg>
<div class="ct" style="top:350.0px;">)-sLid3r-(</div>
<svg class="ic" style="top:369px;left:660px" width="16" height="16"><use href="#np"/></svg>
<div class="ct" style="top:369.4px;font-style:italic;left:684px;letter-spacing:-0.5px;">-/WwL/Blue/-</div>
<svg class="ic" style="top:390px;left:660px" width="16" height="16"><use href="#np"/></svg>
<div class="ct" style="top:389.6px;">| - Gh0sT - |</div>
<svg class="arr" style="top:413px;left:656px" width="11" height="7"><path d="M0 0H11L5.5 6.5Z" fill="#0000e0"/></svg><div class="grp" style="top:409.0px">Hst - <span style="color:#0a0aa0">1/16</span></div>
<svg class="ic" style="top:426px;left:660px" width="16" height="16"><use href="#fl"/></svg>
<div class="ct" style="top:425.6px;">Necromancer</div>
<svg class="arr" style="top:449px;left:656px" width="11" height="7"><path d="M0 0H11L5.5 6.5Z" fill="#0000e0"/></svg><div class="grp" style="top:445.2px">fAtAl - <span style="color:#0a0aa0">1/8</span></div>
<svg class="ic" style="top:462px;left:660px" width="16" height="16"><use href="#na"/></svg>
<div class="ct" style="top:461.5px;">cOLd</div>
<svg class="arr" style="top:486px;left:656px" width="11" height="7"><path d="M0 0H11L5.5 6.5Z" fill="#0000e0"/></svg><div class="grp" style="top:481.6px">andere online clans - 0/5</div>
<div class="sep" style="top:498.0px"><b></b><span>Offline</span><b></b></div>
<svg class="arr" style="top:515px;left:657px" width="7" height="12"><path d="M0.5 0.5L6.5 6L0.5 11.5Z" fill="#f00010" stroke="#700000" stroke-width="1"/></svg><div class="grp" style="top:514.6px">Friends - 10/10</div>
<svg class="arr" style="top:531px;left:657px" width="7" height="12"><path d="M0.5 0.5L6.5 6L0.5 11.5Z" fill="#f00010" stroke="#700000" stroke-width="1"/></svg><div class="grp" style="top:530.3px">LAN - 24/26</div>
<svg class="arr" style="top:547px;left:657px" width="7" height="12"><path d="M0.5 0.5L6.5 6L0.5 11.5Z" fill="#f00010" stroke="#700000" stroke-width="1"/></svg><div class="grp" style="top:546.4px">others - 21/23</div>
<svg class="arr" style="top:563px;left:657px" width="7" height="12"><path d="M0.5 0.5L6.5 6L0.5 11.5Z" fill="#f00010" stroke="#700000" stroke-width="1"/></svg><div class="grp" style="top:562.6px">PPC - 26/29</div>
<svg class="arr" style="top:579px;left:657px" width="7" height="12"><path d="M0.5 0.5L6.5 6L0.5 11.5Z" fill="#f00010" stroke="#700000" stroke-width="1"/></svg><div class="grp" style="top:578.8px">Tile - 12/12</div>
<svg class="arr" style="top:596px;left:657px" width="7" height="12"><path d="M0.5 0.5L6.5 6L0.5 11.5Z" fill="#f00010" stroke="#700000" stroke-width="1"/></svg><div class="grp" style="top:595.0px">WwLN - 15/19</div>
<svg class="arr" style="top:611px;left:657px" width="7" height="12"><path d="M0.5 0.5L6.5 6L0.5 11.5Z" fill="#f00010" stroke="#700000" stroke-width="1"/></svg><div class="grp" style="top:610.6px">Hst - 15/16</div>
<svg class="arr" style="top:627px;left:657px" width="7" height="12"><path d="M0.5 0.5L6.5 6L0.5 11.5Z" fill="#f00010" stroke="#700000" stroke-width="1"/></svg><div class="grp" style="top:626.8px">fAtAl - 7/8</div>
<svg class="arr" style="top:643px;left:657px" width="7" height="12"><path d="M0.5 0.5L6.5 6L0.5 11.5Z" fill="#f00010" stroke="#700000" stroke-width="1"/></svg><div class="grp" style="top:642.2px">andere online clans - 5/5</div>
<div class="sep" style="top:659.0px"><b></b><span>Others</span><b></b></div>
<svg class="arr" style="top:676px;left:657px" width="7" height="12"><path d="M0.5 0.5L6.5 6L0.5 11.5Z" fill="#f8f800" stroke="#707000" stroke-width="1"/></svg><div class="grp" style="top:675.8px">Awaiting Authorization - 1</div>
</body></html>
